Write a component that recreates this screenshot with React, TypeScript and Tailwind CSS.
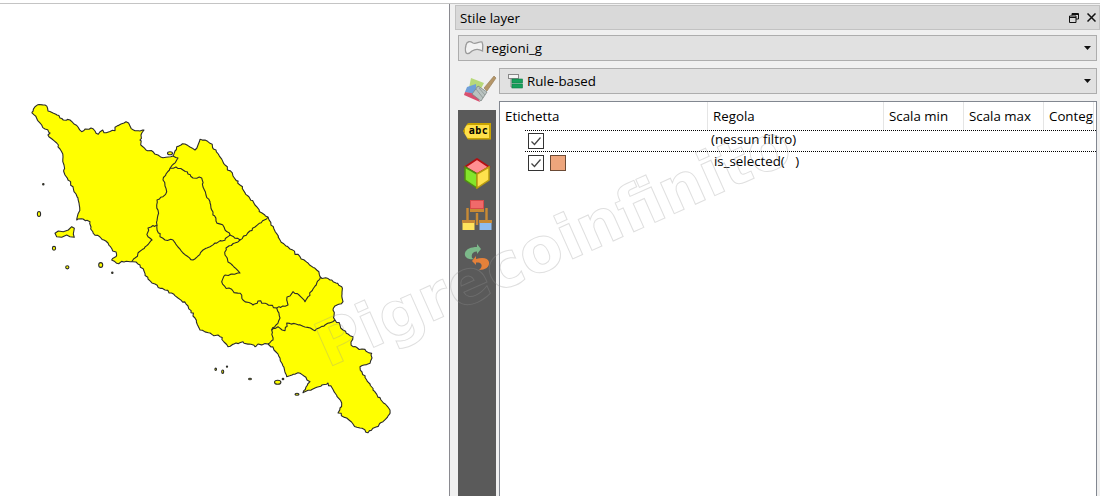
const uiFont = "font-['Open_Sans','Noto_Sans',sans-serif]";

const columns = [
  { label: "Etichetta", width: "w-[208px]" },
  { label: "Regola", width: "w-[176px]" },
  { label: "Scala min", width: "w-[80px]" },
  { label: "Scala max", width: "w-[80px]" },
  { label: "Conteggio", width: "w-[50px]" },
];

const outer =
  "M31.7 112.7 L35 106.7 L39 104.5 L45 105 L48 111 L53 113 L57 115 L60 118 L63.3 120 L70 120 L74 124 L78 127 L81.7 131.7 L85 129 L91 128 L95 131 L98.3 134.3 L102.7 130 L104 132.7 L110 131.5 L115 130.7 L115 127.3 L121 124 L126 121.7 L130 126 L135 130.7 L140 131 L144 130 L141 135 L140 140 L142 146 L146 150 L153 151.7 L158 155 L163 157.7 L168 157 L173 156 L175 151 L176.7 146.7 L181 145 L185 144 L190 147 L195 150 L198 145 L200 139.3 L205 140 L210 143.3 L216 150 L225 165 L233 176 L240 185 L248 196 L255 205 L262 213 L268 217 L274 229 L280 240 L290 249 L300 256.7 L308 263 L316.7 270 L320 276.7 L330 280 L336 283 L341.7 286.7 L342 294 L343 301.7 L337 305 L333 310 L334 316 L335 320 L340 325 L343 330 L348 334 L353 336.7 L351 342 L353 346.7 L362 349 L371.7 353.3 L372 358 L370 363.3 L364 365 L360 366.7 L362 372 L366.7 380 L370 384 L373 390 L381 400 L390 410 L388 416 L383 421.7 L376 427 L368 432.7 L360 428 L353 424 L346.7 418 L338 413 L340 408 L341.7 403 L335 393 L328 383 L322 385 L315 388 L303 392.7 L306 387 L310 381.7 L304 376 L298 372.7 L292 375 L286.7 376.7 L283 366 L280 358 L274 350 L268 344 L258 344 L255 346.7 L249 344 L243 341.7 L236 343 L228 346.7 L224 342 L220 336.7 L210 333 L200 330 L195 318 L188 306 L178 298 L165 290 L155 284 L148 279 L144 271 L140 265 L136 262 L131.7 261.7 L124 262 L116.7 263.3 L111.7 260 L116.7 255 L112 249 L108 243 L100 237 L93 233 L91 227 L90 221.7 L83 219 L76.7 220 L79 212 L79 203 L76 194 L73 186.7 L68 180 L65 175 L64 165 L63 156.7 L60 149 L56.7 143 L52 139 L48 135 L50 133 L45 129 L41.7 125 L37 119 L31.7 112.7";

const borders = [
  "M176.7 160 L170 168.3 L166 174 L163 180 L165 186 L166.7 191.7 L163 196.7 L157 200 L156.7 205 L158 215 L157 225 L151 227 L148 228 L148 236.7 L152 240 L145 247 L138 253 L135 258 L131.7 261.7",
  "M170 168.3 L176 167 L183 170 L188 174 L193 178 L201.7 178 L203 187 L206 195 L210 203 L213 212 L216 221 L224 227 L230 235 L222 241 L215 243 L210 246.7 L203 250 L198 256 L193 260 L187 256 L183 253 L178 247 L173 240 L165 240 L160 236.7 L157 225",
  "M173 156 L178 158 L176.7 160",
  "M268 217 L255 227 L240 240 L230 235",
  "M240 240 L226 248 L225 255 L228 262 L234 267 L240 273 L232 274 L225 275 L221.7 281.7 L225 286.7 L233 291 L241.7 295 L243 300 L253 305 L258 301 L267 304 L276.7 308 L280 318 L276 325 L271.7 330 L273 340 L268 344",
  "M320.7 276.7 L313 289 L305 301.7 L299 295 L293 291.7 L287 297 L286.7 300 L288 305 L276.7 308",
  "M335 320 L325 325 L315 330.7 L305 327 L296 324 L286.7 323 L285 330.7 L278 326.7 L271.7 330",
];

const elba =
  "M55 233.3 L58.3 231 L63.3 231.7 L68.3 230 L71.7 226.7 L74.3 228.3 L73.3 234 L74.3 237.3 L70 236.7 L66.7 235 L61.7 237.3 L56.7 236.7 Z";

const islands = [
  { cx: 39, cy: 214, rx: 1.6, ry: 2.5 },
  { cx: 54, cy: 248.3, rx: 1.6, ry: 1.9 },
  { cx: 67.3, cy: 267.3, rx: 1.6, ry: 1.6 },
  { cx: 100.7, cy: 265, rx: 2, ry: 2.4 },
  { cx: 43.3, cy: 184.3, rx: 0.7, ry: 0.7 },
  { cx: 112.3, cy: 272.7, rx: 0.7, ry: 0.7 },
  { cx: 170, cy: 153.3, rx: 2.5, ry: 1.5 },
  { cx: 215.7, cy: 369.3, rx: 0.8, ry: 1.2 },
  { cx: 222.7, cy: 371.7, rx: 1, ry: 1.7 },
  { cx: 227, cy: 366.7, rx: 0.6, ry: 0.6 },
  { cx: 250, cy: 379, rx: 1.4, ry: 0.8 },
  { cx: 277.7, cy: 382.3, rx: 3.2, ry: 2 },
  { cx: 283, cy: 379, rx: 0.8, ry: 0.8 },
  { cx: 297, cy: 394.3, rx: 2, ry: 1 },
];

// coastlines are jagged, so break the long segments up a bit
function roughen(d: string) {
  const nums = d.match(/[\d.]+/g)!.map(Number);
  let seed = 7;
  const jitter = () => {
    seed = (seed * 16807) % 2147483647;
    return (seed % 1000) / 1000 - 0.5;
  };
  let out = `M${nums[0]} ${nums[1]}`;
  for (let i = 2; i < nums.length; i += 2) {
    const [x0, y0, x1, y1] = [nums[i - 2], nums[i - 1], nums[i], nums[i + 1]];
    const steps = Math.max(1, Math.round(Math.hypot(x1 - x0, y1 - y0) / 2.5));
    for (let s = 1; s < steps; s++) {
      const x = x0 + ((x1 - x0) * s) / steps + jitter() * 2.2;
      const y = y0 + ((y1 - y0) * s) / steps + jitter() * 2.2;
      out += ` L${x.toFixed(1)} ${y.toFixed(1)}`;
    }
    out += ` L${x1} ${y1}`;
  }
  return out;
}

function RegionMap() {
  return (
    <svg viewBox="0 0 449 492" className="block w-[449px] h-[492px]">
      <g transform="translate(0,-4)" stroke="#2b2b2b" strokeWidth="1.1" strokeLinejoin="round">
        <path d={roughen(outer)} fill="#ffff00" />
        {borders.map((d) => (
          <path key={d} d={roughen(d)} fill="none" />
        ))}
        <path d={elba} fill="#ffff00" />
        {islands.map((i) => (
          <ellipse key={i.cx} {...i} fill="#ffff00" />
        ))}
      </g>
    </svg>
  );
}

function Caret() {
  return (
    <svg width="7" height="4" viewBox="0 0 7 4" className="block">
      <path d="M0 0H7L3.5 4Z" fill="#111" />
    </svg>
  );
}

function PolygonIcon() {
  return (
    <svg width="20" height="16" viewBox="0 0 20 16" className="block">
      <path
        d="M2 5 C3 1 6 1 9 3 C12 4.500 15 1 18 2 C19.500 5 18.500 8 18.500 11 C15 9 11 9 8 11 C5 14 2 15 1.500 11 C1 9 1.500 7 2 5Z"
        fill="#f2f2f2"
        stroke="#9a9a9a"
        strokeWidth="1.3"
      />
    </svg>
  );
}

function RuleIcon() {
  return (
    <svg width="15" height="15" viewBox="0 0 15 15" className="block">
      <path d="M3 5V13H5" fill="none" stroke="#888" />
      <rect x="0.500" y="0.500" width="10" height="4" fill="#f4f4f4" stroke="#888" />
      <rect x="4" y="5" width="10.500" height="4" fill="#16a05a" stroke="#0d7a43" strokeWidth="0.6" />
      <rect x="4" y="10" width="10.500" height="4" fill="#16a05a" stroke="#0d7a43" strokeWidth="0.6" />
    </svg>
  );
}

function BrushIcon() {
  return (
    <svg width="34" height="28" viewBox="0 0 34 28" className="block">
      <path d="M8 3 L21 8 L13 23 L6 13Z" fill="#b7d97a" />
      <path d="M4 12 L13 9 L14 20 L2 17Z" fill="#6f9fd8" />
      <path d="M2 17 L14 19 L17 27 L1 20Z" fill="#d8506f" />
      <path d="M21 13 L31 1 L33 3 L24 16Z" fill="#b59668" stroke="#8e7550" strokeWidth="0.6" />
      <path d="M15 11 L24 17 L18 26 L9 19Z" fill="#b9c3c0" stroke="#7c8583" strokeWidth="0.8" />
      <path d="M13 14 L20 23 M16 13 L22 20" stroke="#8b9492" strokeWidth="0.8" />
    </svg>
  );
}

function LabelIcon() {
  return (
    <div className="flex items-center justify-center h-[17px] w-[28px] pl-[3px] bg-[#ffe04a] border-2 border-[#c9a400] rounded-l-[6px] [clip-path:polygon(18%_0,100%_0,100%_100%,18%_100%,0_50%)]">
      <span className="font-['DejaVu_Sans_Mono',monospace] text-[10px] leading-none font-bold text-black tracking-[0.5px]">abc</span>
    </div>
  );
}

function CubeIcon() {
  return (
    <svg width="28" height="31" viewBox="0 0 28 31" className="block">
      <path d="M14 1 L26 9 L14 16 L2 9Z" fill="#ff8f92" stroke="#b40f12" strokeWidth="1.800" />
      <path d="M2 9 L14 16 V30 L2 22Z" fill="#84e62b" stroke="#4f8f10" strokeWidth="1.500" />
      <path d="M26 9 L14 16 V30 L26 22Z" fill="#ffe14d" stroke="#b89a10" strokeWidth="1.500" />
    </svg>
  );
}

function RuleBrushIcon() {
  return (
    <svg width="30" height="30" viewBox="0 0 30 30" className="block">
      <path d="M5.500 8V20 M24.500 8V20 M15 13V25" stroke="#c88a35" strokeWidth="2.400" />
      <rect x="8.500" y="0.500" width="13" height="8" fill="#f06a6a" stroke="#d64a4a" />
      <rect x="8" y="9" width="14" height="3" fill="#c88a35" />
      <rect x="0.500" y="23" width="12" height="7" fill="#ffe45c" />
      <rect x="0" y="20" width="13" height="3" fill="#c88a35" />
      <rect x="17.500" y="23" width="12" height="7" fill="#8fbcf0" />
      <rect x="17" y="20" width="13" height="3" fill="#c88a35" />
    </svg>
  );
}

function HistoryIcon() {
  return (
    <svg width="27" height="27" viewBox="0 0 27 27" className="block">
      <path
        d="M13 0 L17 5 L13 10 V7.500 C9 7.500 7 10 8 14 L10 15 C4 16 0 13 1 9 C2 5 7 3 13 3Z"
        fill="#7cb98a"
      />
      <path
        d="M12 12 L8 17 L12 21 V18.500 C16 18 19 20 17 24 L15 26 C21 26 26 23 25 18 C24 14 19 13 12 15Z"
        fill="#e5813a"
      />
    </svg>
  );
}

function Combo({ children, className }: { children: React.ReactNode; className?: string }) {
  return (
    <div className={`flex items-center justify-between h-[26px] bg-[#e1e1e1] border border-[#adadad] pr-[5px] ${className ?? ""}`}>
      <div className="flex items-center">{children}</div>
      <Caret />
    </div>
  );
}

function Check() {
  return (
    <div className="flex items-center justify-center w-[16px] h-[16px] bg-white border border-[#333]">
      <svg width="12" height="10" viewBox="0 0 12 10" className="block">
        <path d="M1.500 5.500 L4.500 8.500 L10.500 1.500" fill="none" stroke="#444" strokeWidth="1.300" />
      </svg>
    </div>
  );
}

export default function App() {
  return (
    <div className={`relative w-[1100px] h-[496px] overflow-hidden bg-[#f0f0f0] text-[13.3px] leading-none text-black ${uiFont}`}>
      <div className="h-[3px] bg-white" />
      <div className="flex h-[493px] border-t border-[#c4c4c4]">
        <div className="w-[450px] shrink-0 bg-white border-r border-[#8a8a90]">
          <RegionMap />
        </div>

        <div className="flex-1 min-w-0 flex flex-col pt-px">
          <div className="flex items-center justify-between h-[25px] ml-[5px] bg-[#d9d9d9] border border-[#c2c2c2] pl-[4px] pr-[3px]">
            <span className="pt-[2px]">Stile layer</span>
            <div className="flex items-center gap-[8px]">
              <svg width="10" height="10" viewBox="0 0 10 10" className="block">
                <path d="M3 2.500V0.500H9.500V6H7 M0.500 3H7V9.500H0.500Z M0.500 4.500H7 M3 1.500H9.500" fill="none" stroke="#111" />
              </svg>
              <svg width="9" height="9" viewBox="0 0 9 9" className="block">
                <path d="M0.500 0.500L8.500 8.500M8.500 0.500L0.500 8.500" stroke="#111" strokeWidth="1.500" />
              </svg>
            </div>
          </div>

          <Combo className="mt-[5px] ml-[8px] mr-[3px] pl-[5px]">
            <PolygonIcon />
            <span className="ml-[2px] pt-[1px]">regioni_g</span>
          </Combo>

          <div className="flex flex-1 min-h-0 mt-[7px] ml-[8px] mr-[3px]">
            <div className="w-[41px] shrink-0 flex flex-col">
              <div className="h-[42px] pt-[7px] pl-[5px]">
                <BrushIcon />
              </div>
              <div className="flex-1 w-[38px] bg-[#5a5a5a] flex flex-col items-center">
                <div className="h-[42px] flex items-center justify-center"><LabelIcon /></div>
                <div className="h-[42px] flex items-center justify-center"><CubeIcon /></div>
                <div className="h-[42px] flex items-center justify-center"><RuleBrushIcon /></div>
                <div className="h-[42px] flex items-center justify-center"><HistoryIcon /></div>
              </div>
            </div>

            <div className="flex-1 min-w-0 flex flex-col">
              <Combo className="pl-[8px]">
                <RuleIcon />
                <span className="ml-[4px] pt-[1px]">Rule-based</span>
              </Combo>
              <div className="flex-1 mt-[7px] bg-white border border-[#828790] border-b-0">
                <div className="flex h-[28px]">
                  {columns.map((c) => (
                    <div key={c.label} className={`${c.width} shrink-0 flex items-center pl-[5px] pt-[1px] overflow-hidden whitespace-nowrap border-r border-[#e5e5e5]`}>
                      {c.label}
                    </div>
                  ))}
                </div>
                <div className="flex items-center h-[22px] ml-[25px] border-y border-dotted border-black">
                  <div className="w-[186px] pl-[3px]"><Check /></div>
                  <span className="mb-[2px]">(nessun filtro)</span>
                </div>
                <div className="flex items-center h-[22px] ml-[25px]">
                  <div className="flex items-center gap-[6px] w-[189px] pl-[3px]">
                    <Check />
                    <div className="w-[16px] h-[16px] bg-[#eda57c] border border-[#6b4a35]" />
                  </div>
                  <span className="mb-[2px] whitespace-pre">is_selected(   )</span>
                </div>
              </div>
            </div>
          </div>
        </div>
      </div>

      {/* watermark sopra tutta la pagina */}
      <div className="absolute left-[328px] top-[316px] origin-[0_53px] -rotate-[24deg] pointer-events-none whitespace-nowrap font-['DejaVu_Sans',sans-serif] font-bold text-[62px] leading-none text-transparent [-webkit-text-stroke:1px_rgba(150,150,150,0.3)]">
        Pigrecoinfinito
      </div>
    </div>
  );
}
